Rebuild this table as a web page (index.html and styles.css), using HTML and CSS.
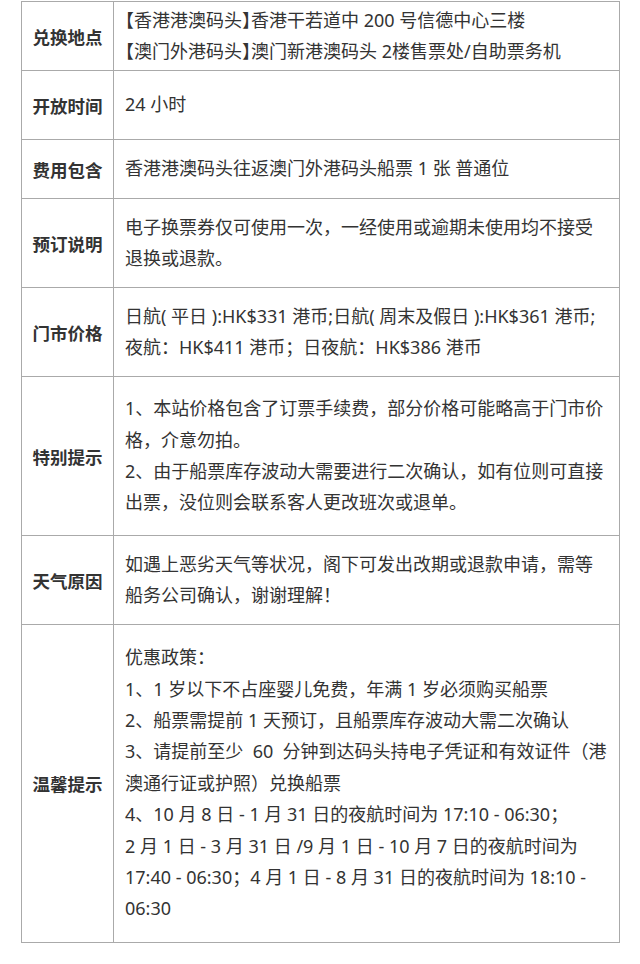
FILE: index.html
```html
<!DOCTYPE html>
<html lang="zh-CN">
<head>
<meta charset="utf-8">
<title>船票信息</title>
<link rel="stylesheet" href="styles.css">
</head>
<body>
<table class="info">
  <tr class="h69">
    <th>兑换地点</th>
    <td><span class="tag">【香港港澳码头】</span>香港干若道中 200 号信德中心三楼<br><span class="tag">【澳门外港码头】</span>澳门新港澳码头 2楼售票处/自助票务机</td>
  </tr>
  <tr class="h69">
    <th>开放时间</th>
    <td>24 小时</td>
  </tr>
  <tr class="h59">
    <th>费用包含</th>
    <td>香港港澳码头往返澳门外港码头船票 1 张 普通位</td>
  </tr>
  <tr class="h89">
    <th>预订说明</th>
    <td>电子换票券仅可使用一次，一经使用或逾期未使用均不接受<br>退换或退款。</td>
  </tr>
  <tr class="h89">
    <th>门市价格</th>
    <td>日航( 平日 ):HK$331 港币;日航( 周末及假日 ):HK$361 港币;<br>夜航：HK$411 港币；日夜航：HK$386 港币</td>
  </tr>
  <tr class="h159">
    <th>特别提示</th>
    <td>1、本站价格包含了订票手续费，部分价格可能略高于门市价<br>格，介意勿拍。<br>2、由于船票库存波动大需要进行二次确认，如有位则可直接<br>出票，没位则会联系客人更改班次或退单。</td>
  </tr>
  <tr class="h89">
    <th>天气原因</th>
    <td>如遇上恶劣天气等状况，阁下可发出改期或退款申请，需等<br>船务公司确认，谢谢理解！</td>
  </tr>
  <tr class="h318">
    <th>温馨提示</th>
    <td>优惠政策：<br>1、1 岁以下不占座婴儿免费，年满 1 岁必须购买船票<br>2、船票需提前 1 天预订，且船票库存波动大需二次确认<br>3、请提前至少&nbsp; 60&nbsp; 分钟到达码头持电子凭证和有效证件（港<br>澳通行证或护照）兑换船票<br>4、10 月 8 日 - 1 月 31 日的夜航时间为 17:10 - 06:30；<br>2 月 1 日 - 3 月 31 日 /9 月 1 日 - 10 月 7 日的夜航时间为<br>17:40 - 06:30；4 月 1 日 - 8 月 31 日的夜航时间为 18:10 -<br>06:30</td>
  </tr>
</table>
</body>
</html>
```

FILE: styles.css
```css
html, body {
  margin: 0;
  padding: 0;
  background: #ffffff;
}

body {
  font-family: "Noto Sans", "Noto Sans CJK SC", sans-serif;
  color: #333333;
}

.info {
  border-collapse: collapse;
  width: 599px;
  margin: 1px 0 0 21px;
}

.info th,
.info td {
  border: 1px solid #aaaaaa;
  vertical-align: middle;
}

.info th {
  width: 91px;
  padding: 0;
  font-size: 17.5px;
  font-weight: bold;
  text-align: center;
  color: #333333;
  white-space: nowrap;
}

.info td {
  padding: 0 4px 0 11px;
  font-size: 18px;
  line-height: 31.4px;
  text-align: left;
  white-space: nowrap;
}

.tag {
  font-feature-settings: "halt";
}

.h59 { height: 59px; }
.h69 { height: 69px; }
.h89 { height: 89px; }
.h159 { height: 159px; }
.h318 { height: 318px; }
```
